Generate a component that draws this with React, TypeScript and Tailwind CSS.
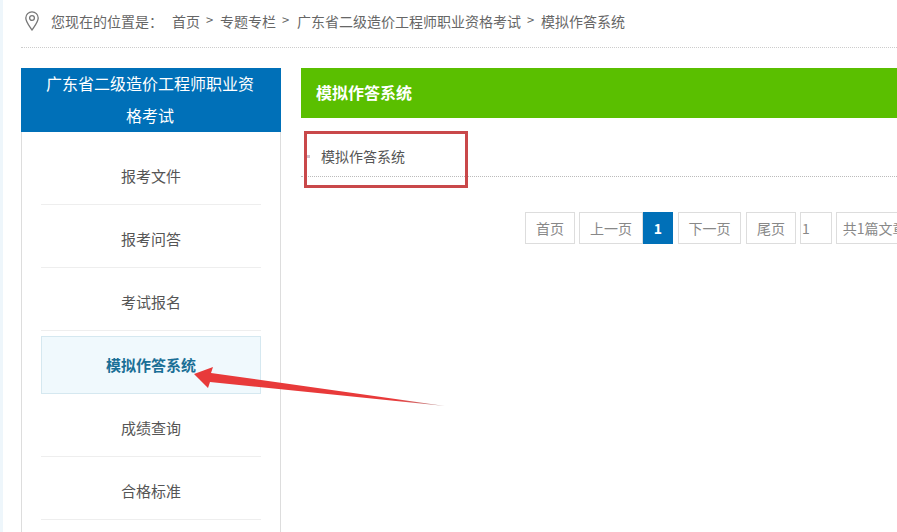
import React from 'react'

const menu = ['报考文件', '报考问答', '考试报名', '模拟作答系统', '成绩查询', '合格标准']

const PageBox = ({label, w, active}: {label: string; w: string; active?: boolean}) => (
  <span
    className={`flex h-8 shrink-0 items-center justify-center border pb-[1px] ${w} ${
      active ? 'border-[#0070b8] bg-[#0070b8] font-bold text-white' : 'border-[#dddddd] text-[#888888]'
    }`}
  >
    {label}
  </span>
)

const Sep = ({w}: {w: string}) => <span className={`mx-[6px] inline-block text-[13px] ${w}`}>&gt;</span>

const App = () => {
  return (
    <div className="relative h-[532px] w-[897px] overflow-hidden bg-white pl-[21px] font-['Noto_Sans_CJK_SC','Liberation_Sans',sans-serif] text-[#555555]">
      <div className="absolute left-0 top-0 h-full w-[3px] bg-[#eef6fb]" />

      <div className="flex h-12 items-center border-b border-dotted border-[#cccccc] pb-[6px] text-sm text-[#666666]">
        <svg className="ml-[4px] mr-[12px] mt-[1px]" width="14" height="20" viewBox="0 0 14 20" fill="none" stroke="#777777" strokeWidth="1.3">
          <path d="M7 19 C4.5 15 .8 11 .8 7 A6.2 6.2 0 0 1 13.2 7 C13.2 11 9.5 15 7 19 Z" />
          <circle cx="7" cy="7" r="2.4" />
        </svg>
        <span className="mr-[9px]">您现在的位置是：</span>
        <span>首页</span>
        <Sep w="w-2" />
        <span>专题专栏</span>
        <Sep w="w-[9px]" />
        <span>广东省二级造价工程师职业资格考试</span>
        <Sep w="w-2" />
        <span>模拟作答系统</span>
      </div>

      <div className="mt-5 flex gap-5">
        <aside className="w-[260px] shrink-0">
          <div className="h-16 bg-[#0070b8] px-[22px] text-center text-base leading-8 text-white">
            <p className="-translate-y-px -translate-x-px">广东省二级造价工程师职业资格考试</p>
          </div>
          <ul className="border-x border-[#dddddd] px-[19px] pt-[10px] pb-8 text-[15px]">
            {menu.map((item) =>
              item === '模拟作答系统' ? (
                <li key={item} className="mt-[5px] flex h-[58px] items-center justify-center border border-[#d5e8f0] bg-[#f0f9fd] font-bold text-[#1a6f96]">
                  {item}
                </li>
              ) : (
                <li key={item} className="flex h-[63px] items-center justify-center border-b border-[#eeeeee] pt-[6px]">
                  {item}
                </li>
              ),
            )}
          </ul>
        </aside>

        <main className="min-w-0 flex-1">
          <div className="flex h-[50px] items-center bg-[#5abf00] pb-[3px] pl-[15px] text-base font-bold text-white">模拟作答系统</div>
          <div className="mt-[19px] flex h-10 items-center border-b border-dotted border-[#bbbbbb] pb-[1px] text-sm">
            <span className="ml-[6px] mr-[11px] h-[3px] w-[3px] bg-[#d0c4d0]" />
            模拟作答系统
          </div>
          <div className="ml-[224px] mt-[35px] flex w-[400px] text-sm">
            <PageBox label="首页" w="w-[50px]" />
            <span className="ml-1">
              <PageBox label="上一页" w="w-16" />
            </span>
            <PageBox label="1" w="w-[30px]" active />
            <span className="ml-[5px]">
              <PageBox label="下一页" w="w-[63px]" />
            </span>
            <span className="ml-[5px]">
              <PageBox label="尾页" w="w-[50px]" />
            </span>
            <span className="ml-1 flex h-8 w-8 items-center border border-[#dddddd] pl-[1px] text-[#888888]">1</span>
            <span className="ml-1 flex h-8 w-[90px] items-center border border-[#dddddd] pb-[1px] pl-[6px] text-[#888888]">共1篇文章</span>
          </div>
        </main>
      </div>

      {/* red annotations drawn on top of the page */}
      <div className="absolute left-[304px] top-[131px] h-[57px] w-[164px] border-[3px] border-[#c9484a]" />
      <svg className="absolute left-[190px] top-[360px]" width="260" height="50" viewBox="0 0 260 50">
        <defs>
          <linearGradient id="tail" x1="0" x2="1" y1="0" y2="0">
            <stop offset="0.8" stopColor="#e83a3a" />
            <stop offset="1" stopColor="#b99a9a" />
          </linearGradient>
        </defs>
        <path d="M4 14 L23 7 L21 13 L255 46 L20 22 L18 28 Z" fill="url(#tail)" />
      </svg>
    </div>
  )
}

export default App
